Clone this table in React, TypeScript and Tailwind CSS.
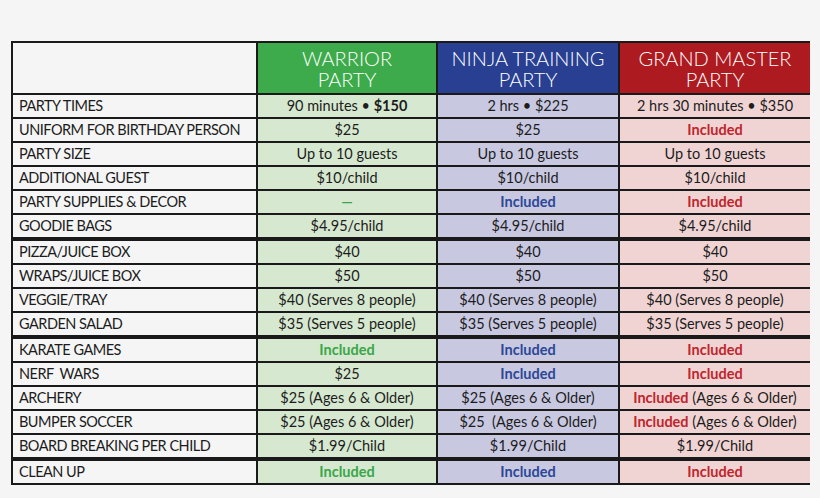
import React from "react";

type Cell = React.ReactNode;

const G = "text-[#3aa64a] font-bold";
const B = "text-[#2c4796] font-bold";
const R = "text-[#c0252c] font-bold";

const rows: { label: string; cells: [Cell, Cell, Cell]; thick?: boolean }[] = [
  {
    label: "PARTY TIMES",
    cells: [
      <>90 minutes • <span className="font-bold">$150</span></>,
      "2 hrs • $225",
      "2 hrs 30 minutes • $350",
    ],
  },
  { label: "UNIFORM FOR BIRTHDAY PERSON", cells: ["$25", "$25", <span className={R}>Included</span>] },
  { label: "PARTY SIZE", cells: ["Up to 10 guests", "Up to 10 guests", "Up to 10 guests"] },
  { label: "ADDITIONAL GUEST", cells: ["$10/child", "$10/child", "$10/child"] },
  {
    label: "PARTY SUPPLIES & DECOR",
    cells: [<span className={G}>—</span>, <span className={B}>Included</span>, <span className={R}>Included</span>],
  },
  { label: "GOODIE BAGS", cells: ["$4.95/child", "$4.95/child", "$4.95/child"], thick: true },
  { label: "PIZZA/JUICE BOX", cells: ["$40", "$40", "$40"] },
  { label: "WRAPS/JUICE BOX", cells: ["$50", "$50", "$50"] },
  {
    label: "VEGGIE/TRAY",
    cells: ["$40 (Serves 8 people)", "$40 (Serves 8 people)", "$40 (Serves 8 people)"],
  },
  {
    label: "GARDEN SALAD",
    cells: ["$35 (Serves 5 people)", "$35 (Serves 5 people)", "$35 (Serves 5 people)"],
    thick: true,
  },
  {
    label: "KARATE GAMES",
    cells: [<span className={G}>Included</span>, <span className={B}>Included</span>, <span className={R}>Included</span>],
  },
  {
    label: "NERF  WARS",
    cells: ["$25", <span className={B}>Included</span>, <span className={R}>Included</span>],
  },
  {
    label: "ARCHERY",
    cells: [
      "$25 (Ages 6 & Older)",
      "$25 (Ages 6 & Older)",
      <><span className={R}>Included</span> (Ages 6 &amp; Older)</>,
    ],
  },
  {
    label: "BUMPER SOCCER",
    cells: [
      "$25 (Ages 6 & Older)",
      "$25  (Ages 6 & Older)",
      <><span className={R}>Included</span> (Ages 6 &amp; Older)</>,
    ],
  },
  { label: "BOARD BREAKING PER CHILD", cells: ["$1.99/Child", "$1.99/Child", "$1.99/Child"], thick: true },
  {
    label: "CLEAN UP",
    cells: [<span className={G}>Included</span>, <span className={B}>Included</span>, <span className={R}>Included</span>],
  },
];

const cols = "grid grid-cols-[243px_178px_180px_190px] gap-[2px]";

function Head({ bg, a }: { bg: string; a: string }) {
  return (
    <div className={`h-[50px] ${bg} text-white text-[20px] leading-[21px] font-light flex flex-col items-center justify-center pt-[1px]`}>
      <span>{a}</span>
      <span>PARTY</span>
    </div>
  );
}

export default function App() {
  return (
    <div className="w-[820px] h-[498px] bg-[#f5f5f5] pt-[41px] pl-[11px] font-['Lato',sans-serif] text-[#1c1c1c]">
      <div className="w-[799px] bg-[#1a1a1a] p-[2px] flex flex-col gap-[2px]">
        <div className={cols}>
          <div className="h-[50px] bg-[#f5f5f5]" />
          <Head bg="bg-[#3dab4b]" a="WARRIOR" />
          <Head bg="bg-[#283f92]" a="NINJA TRAINING" />
          <Head bg="bg-[#ad1b20]" a="GRAND MASTER" />
        </div>
        {rows.map((r, i) => (
          <div key={i} className={`${cols} ${r.thick ? "mb-[2px]" : ""}`}>
            <div className="h-[22px] bg-[#f5f5f5] pl-[6px] flex items-center text-[14.5px] tracking-[-0.5px]">
              <span className="whitespace-pre">{r.label}</span>
            </div>
            <div className="h-[22px] bg-[#d7e8d0] flex items-center justify-center text-[14.5px]">
              <span className="whitespace-pre">{r.cells[0]}</span>
            </div>
            <div className="h-[22px] bg-[#c8c8e1] flex items-center justify-center text-[14.5px]">
              <span className="whitespace-pre">{r.cells[1]}</span>
            </div>
            <div className="h-[22px] bg-[#f0d4d4] flex items-center justify-center text-[14.5px]">
              <span className="whitespace-pre">{r.cells[2]}</span>
            </div>
          </div>
        ))}
      </div>
    </div>
  );
}
